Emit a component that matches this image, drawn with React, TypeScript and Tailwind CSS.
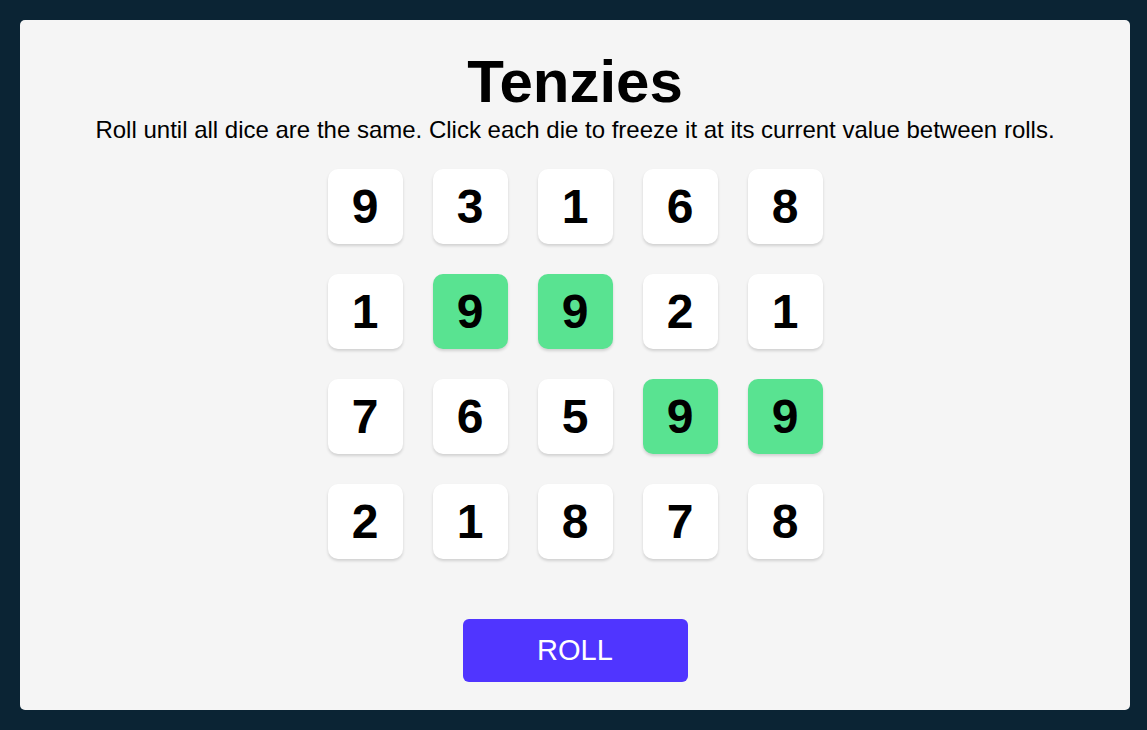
const dice = [
  { value: 9, held: false },
  { value: 3, held: false },
  { value: 1, held: false },
  { value: 6, held: false },
  { value: 8, held: false },
  { value: 1, held: false },
  { value: 9, held: true },
  { value: 9, held: true },
  { value: 2, held: false },
  { value: 1, held: false },
  { value: 7, held: false },
  { value: 6, held: false },
  { value: 5, held: false },
  { value: 9, held: true },
  { value: 9, held: true },
  { value: 2, held: false },
  { value: 1, held: false },
  { value: 8, held: false },
  { value: 7, held: false },
  { value: 8, held: false },
]

function Die({ value, held }: { value: number; held: boolean }) {
  return (
    <button
      className={`w-[75px] h-[75px] rounded-[10px] flex items-center justify-center text-[48px] font-bold leading-none text-black shadow-[0_2px_3px_rgba(0,0,0,0.15)] ${
        held ? 'bg-[#59E391]' : 'bg-white'
      }`}
    >
      {value}
    </button>
  )
}

export default function App() {
  return (
    <div className="h-[730px] bg-[#0B2434] p-5" style={{ fontFamily: '"Liberation Sans", Arial, sans-serif' }}>
      <main className="w-[1110px] h-[690px] bg-[#F5F5F5] rounded-[5px] flex flex-col items-center pt-[32px]">
        <h1 className="text-[60px] font-bold leading-none text-black">Tenzies</h1>
        <p className="text-[24px] leading-none text-black mt-[6px]">
          Roll until all dice are the same. Click each die to freeze it at its current value between rolls.
        </p>
        <div className="grid grid-cols-5 gap-[30px] mt-[27px]">
          {dice.map((d, i) => (
            <Die key={i} value={d.value} held={d.held} />
          ))}
        </div>
        <button className="mt-[60px] w-[225px] h-[63px] rounded-[6px] bg-[#5035FF] text-white text-[29px] leading-none">
          ROLL
        </button>
      </main>
    </div>
  )
}
